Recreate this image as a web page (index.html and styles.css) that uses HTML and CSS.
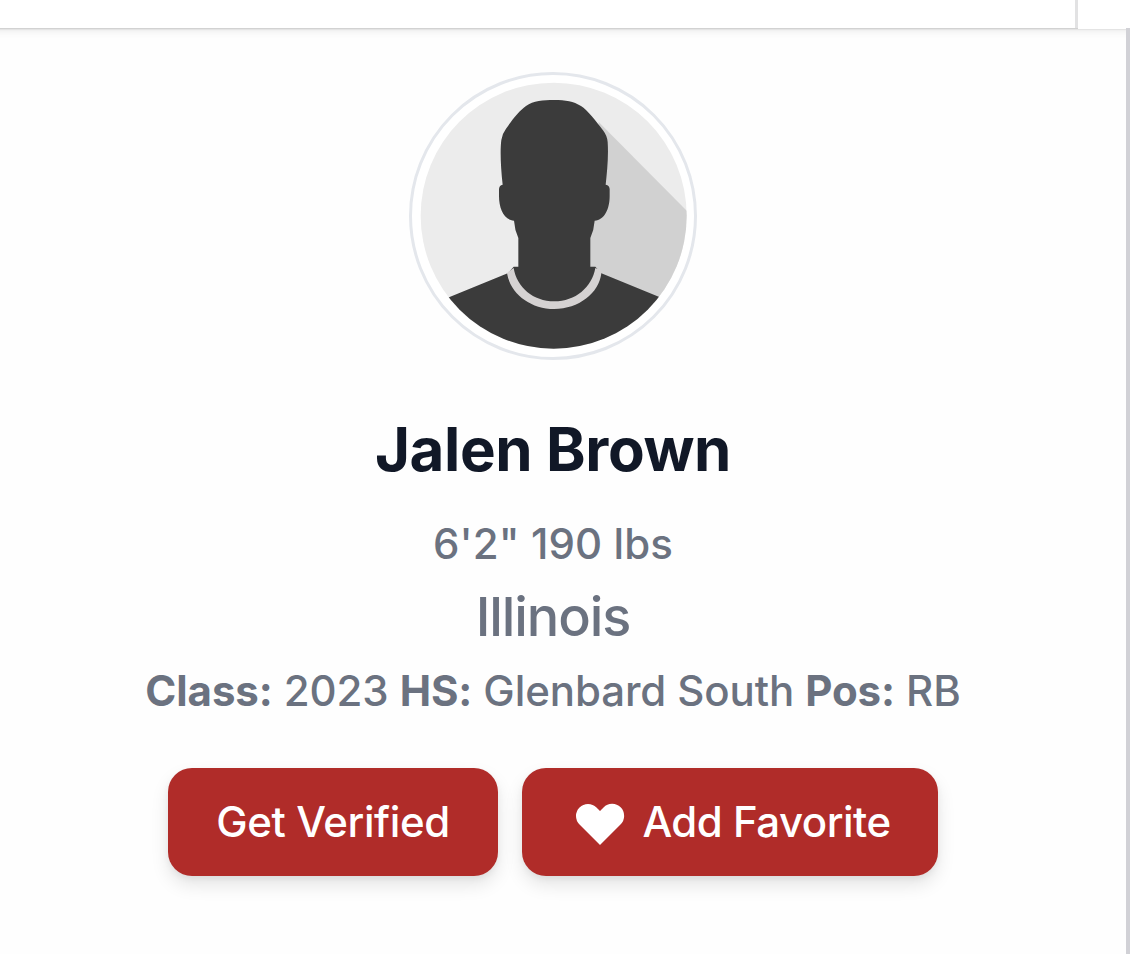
FILE: index.html
```html
<!DOCTYPE html>
<html lang="en">
  <head>
    <meta charset="UTF-8" />
    <meta name="viewport" content="width=device-width, initial-scale=1.0" />
    <title>Jalen Brown</title>
    <link rel="stylesheet" href="styles.css">
  </head>
  <body>
    <header class="topbar">
      <div class="topbar-main"></div>
      <div class="topbar-side"></div>
    </header>
    <main class="profile">
      <div class="avatar">
        <svg viewBox="36 45 846 846">
          <clipPath id="round"><circle cx="461" cy="467" r="399" /></clipPath>
          <g clip-path="url(#round)">
            <rect x="60" y="60" width="810" height="810" fill="#ececec" />
            <path d="M596 186 L870 462 V760 L560 640 V480Z" fill="#d1d1d1" />
            <path d="M355 620 V534 Q344 510 342 482 C312 480 297 446 297 408 V388 Q297 376 308 374 C302 320 300 270 304 240 Q306 222 318 206 C340 175 358 152 378 138 C400 122 430 120 462 120 C498 120 520 124 543 138 C562 150 590 186 610 212 Q622 228 623 246 C626 290 621 335 617 374 Q629 376 629 388 V408 C629 446 614 480 584 482 Q582 510 571 534 V620 H586 L604 640 L778 711 L880 760 V880 H50 V750 L147 712 L323 640 L341 620Z" fill="#3b3b3b" />
            <path d="M321 640 C331 700 390 747 463 747 C536 747 597 700 604 640 L600 629 L586 624 C576 682 526 724 463 724 C400 724 350 682 341 624 L325 635Z" fill="#d5d2d2" />
          </g>
        </svg>
      </div>
      <h1 class="name">Jalen Brown</h1>
      <div class="size">6'2" 190 lbs</div>
      <div class="state">Illinois</div>
      <div class="info"><b>Class:</b> 2023 <b>HS:</b> Glenbard South <b>Pos:</b> RB</div>
      <div class="buttons">
        <button class="btn">Get Verified</button>
        <button class="btn btn-favorite">
          <svg class="heart" viewBox="0 0 20 20" fill="currentColor">
            <path fill-rule="evenodd" d="M3.172 5.172a4 4 0 015.656 0L10 6.343l1.172-1.171a4 4 0 115.656 5.656L10 17.657l-6.828-6.829a4 4 0 010-5.656z" clip-rule="evenodd" />
          </svg>
          Add Favorite
        </button>
      </div>
    </main>
  </body>
</html>
```

FILE: styles.css
```css
* {
  box-sizing: border-box;
}
body {
  margin: 0;
  height: 954px;
  display: flex;
  flex-direction: column;
  overflow: hidden;
  background: #fefefe;
  font-family: Inter, "Liberation Sans", sans-serif;
  color: #6b7280;
}
.topbar {
  display: flex;
  height: 28px;
  margin: 0 -12px;
  padding-left: 12px;
  background: white;
  box-shadow: 0 1px 2px rgba(0, 0, 0, 0.18), 0 3px 9px rgba(0, 0, 0, 0.08);
}
.topbar-main {
  width: 1078px;
  border-right: 3px solid #e2e2e3;
}
.topbar-side {
  flex: 1;
  height: 29px;
  background: white;
}
.profile {
  flex: 1;
  display: flex;
  flex-direction: column;
  align-items: center;
  padding: 44px 20px 0 0;
  border-right: 4px solid #d1d1d6;
}
.avatar {
  width: 288px;
  height: 288px;
  border: 3px solid #e4e7ec;
  border-radius: 50%;
  background: white;
}
.avatar svg {
  display: block;
}
.name {
  margin: 48px 0 0;
  font-size: 60px;
  line-height: 83px;
  font-weight: 700;
  letter-spacing: -0.4px;
  color: #111827;
}
.size,
.info {
  font-size: 42px;
  line-height: 60px;
  font-weight: 500;
}
.size {
  margin-top: 23px;
  letter-spacing: 0.1px;
}
.state {
  margin-top: 1px;
  font-size: 54px;
  line-height: 84px;
  font-weight: 500;
  letter-spacing: -1.1px;
}
.info {
  line-height: 64px;
  letter-spacing: -0.1px;
}
.info b {
  font-weight: 700;
}
.buttons {
  display: flex;
  gap: 24px;
  margin-top: 45px;
}
.btn {
  display: flex;
  align-items: center;
  justify-content: center;
  width: 330px;
  height: 108px;
  padding: 0 0 1px;
  border: none;
  border-radius: 24px;
  background: #b02c29;
  color: white;
  font-family: inherit;
  font-size: 42px;
  font-weight: 500;
  letter-spacing: -0.4px;
  white-space: nowrap;
  box-shadow: 0 9px 18px rgba(0, 0, 0, 0.1), 0 3px 6px rgba(0, 0, 0, 0.05);
}
.btn-favorite {
  width: 416px;
  padding-left: 1px;
  letter-spacing: -0.5px;
}
.heart {
  width: 60px;
  height: 60px;
  margin-right: 12px;
}
```
